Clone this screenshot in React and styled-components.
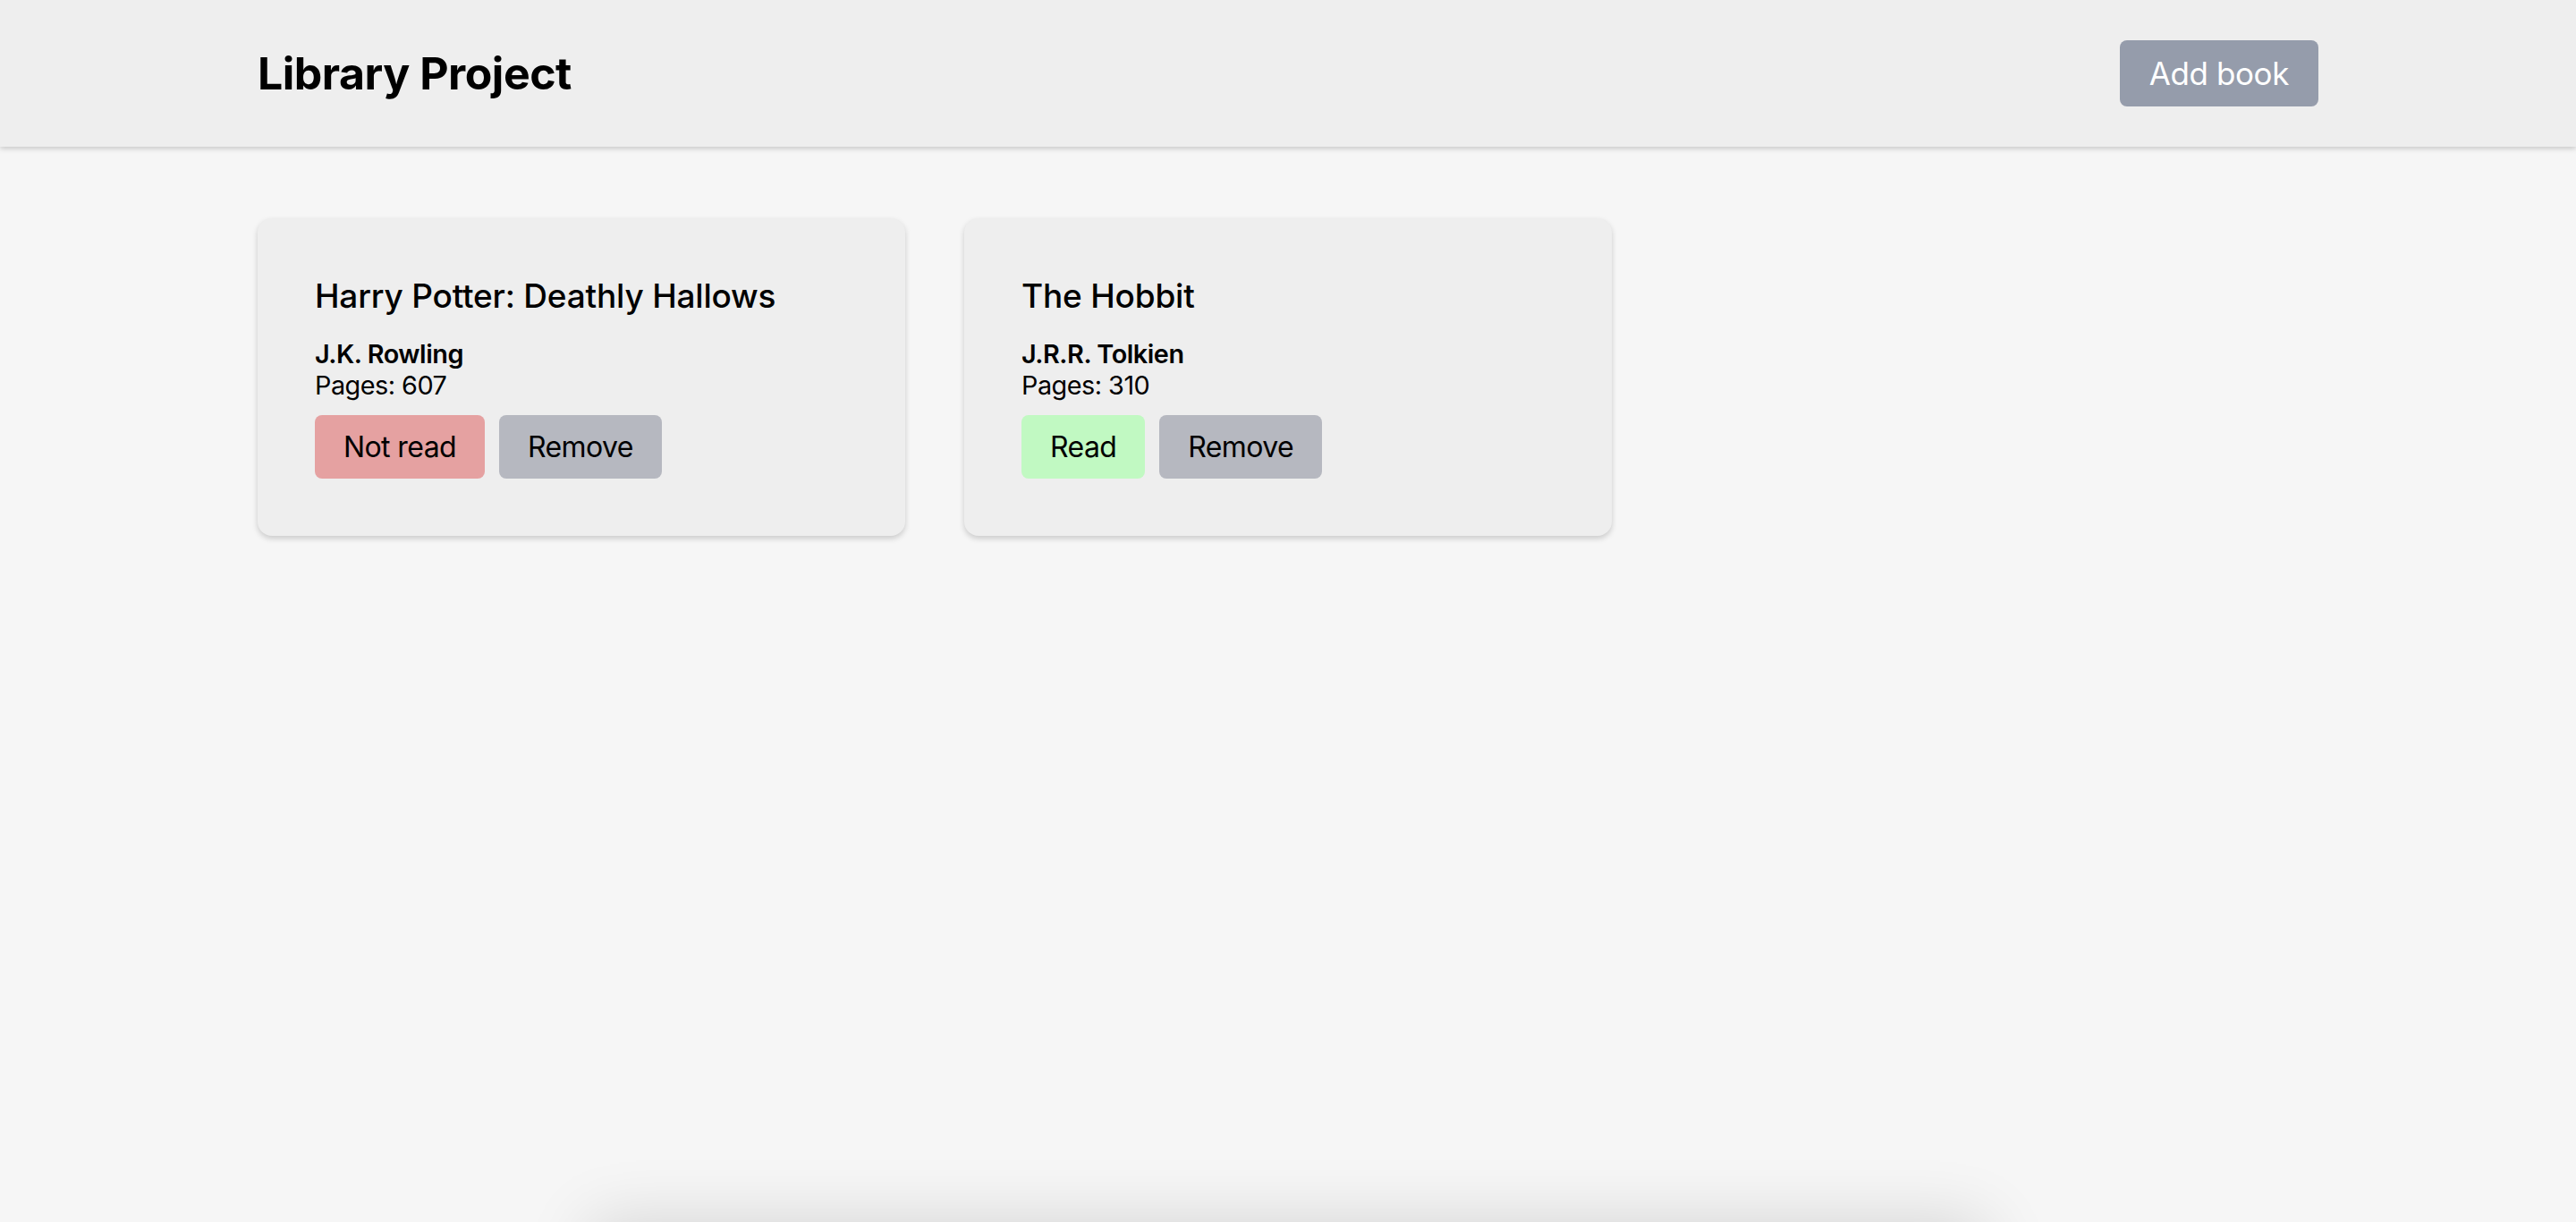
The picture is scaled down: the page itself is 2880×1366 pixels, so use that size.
import styled, { createGlobalStyle } from 'styled-components';

const GlobalStyle = createGlobalStyle`
  * {
    box-sizing: border-box;
  }
  body {
    margin: 0;
    background: #f6f6f6;
    font-family: Inter, "Noto Sans", Arial, sans-serif;
    color: #000;
  }
`;

const Header = styled.header`
  height: 164px;
  padding: 0 10%;
  display: flex;
  align-items: center;
  justify-content: space-between;
  background: #eeeeee;
  box-shadow: 0 2px 6px rgba(0, 0, 0, 0.2);
`;

const Title = styled.h1`
  margin: 0;
  font-size: 50px;
  font-weight: 700;
  letter-spacing: -0.5px;
`;

const AddButton = styled.button`
  border: none;
  border-radius: 8px;
  padding: 16px 33px;
  background: #959cab;
  color: #fff;
  font-family: inherit;
  font-size: 35px;
  letter-spacing: -0.4px;
  cursor: pointer;
`;

const Main = styled.main`
  padding: 80px 10%;
  display: flex;
  flex-wrap: wrap;
  gap: 66px;
`;

const Card = styled.div`
  width: 724px;
  padding: 64px;
  background: #eeeeee;
  border-radius: 16px;
  box-shadow: 0 3px 6px rgba(0, 0, 0, 0.18);
`;

const BookTitle = styled.h2`
  margin: 0 0 25px;
  font-size: 37px;
  font-weight: 500;
  letter-spacing: -0.2px;
`;

const Author = styled.p`
  margin: 0;
  font-size: 28.8px;
  font-weight: 600;
  letter-spacing: -0.45px;
`;

const Pages = styled.p`
  margin: 0;
  font-size: 28.8px;
  letter-spacing: -0.5px;
`;

const Actions = styled.div`
  display: flex;
  gap: 16px;
  margin-top: 16px;
`;

const statusColors = {
  read: '#c1f9c2',
  unread: '#e5a1a1',
  remove: '#b6b8c0',
};

const CardButton = styled.button`
  border: none;
  border-radius: 8px;
  padding: 16px 32px;
  background: ${(p) => statusColors[p.$kind]};
  color: #000;
  font-family: inherit;
  font-size: 32px;
  letter-spacing: -0.6px;
  cursor: pointer;
`;

const ModalShadow = styled.div`
  position: fixed;
  top: 100%;
  left: 50%;
  transform: translateX(-50%);
  width: 1560px;
  height: 400px;
  background: #f6f6f6;
  box-shadow: 0 0 70px rgba(0, 0, 0, 0.14);
`;

const books = [
  { id: 1, title: 'Harry Potter: Deathly Hallows', author: 'J.K. Rowling', pages: 607, read: false },
  { id: 2, title: 'The Hobbit', author: 'J.R.R. Tolkien', pages: 310, read: true },
];

const App = () => {
  return (
    <>
      <GlobalStyle />
      <Header>
        <Title>Library Project</Title>
        <AddButton>Add book</AddButton>
      </Header>
      <Main>
        {books.map((book) => (
          <Card key={book.id}>
            <BookTitle>{book.title}</BookTitle>
            <Author>{book.author}</Author>
            <Pages>Pages: {book.pages}</Pages>
            <Actions>
              <CardButton $kind={book.read ? 'read' : 'unread'}>
                {book.read ? 'Read' : 'Not read'}
              </CardButton>
              <CardButton $kind="remove">Remove</CardButton>
            </Actions>
          </Card>
        ))}
      </Main>
      <ModalShadow />
    </>
  );
};

export default App;
